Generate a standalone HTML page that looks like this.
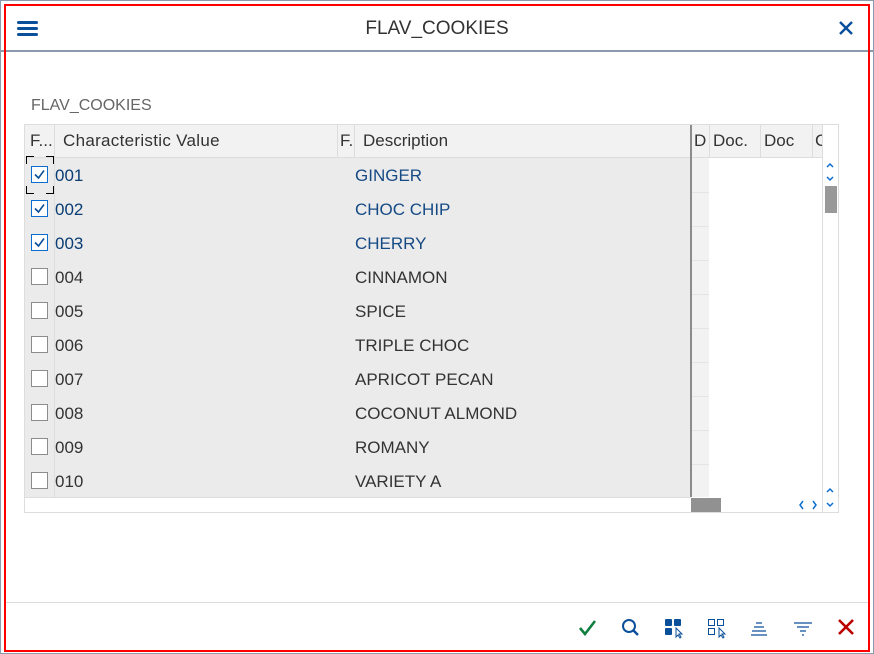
<!DOCTYPE html><html><head><style>
*{margin:0;padding:0;box-sizing:border-box}
body{width:874px;height:654px;background:#fff;font-family:"Liberation Sans",sans-serif;position:relative;overflow:hidden}
.a{position:absolute}
.t{font-size:17px;white-space:nowrap}
</style></head><body>
<div class="a" style="left:0;top:0;width:874px;height:654px;border:1px solid #8a9bb0"></div>
<div class="a" style="left:0;top:50px;width:874px;height:2px;background:#8a9bb0"></div>
<div class="a" style="left:4px;top:4px;width:866px;height:648px;border:2px solid #f00"></div>
<div class="a" style="left:17px;top:21px;width:21px;height:3px;background:#0a4f9a;border-radius:2px"></div>
<div class="a" style="left:17px;top:27px;width:21px;height:3px;background:#0a4f9a;border-radius:2px"></div>
<div class="a" style="left:17px;top:33px;width:21px;height:3px;background:#0a4f9a;border-radius:2px"></div>
<div class="a t" style="left:0;width:874px;text-align:center;top:18px;font-size:19px;color:#333">FLAV_COOKIES</div>
<svg class="a" style="left:838px;top:20px" width="16" height="16"><path d="M2 2L14 14M14 2L2 14" stroke="#0a4f9a" stroke-width="2.4"/></svg>
<div class="a t" style="left:31px;top:97px;font-size:16px;color:#666">FLAV_COOKIES</div>
<div class="a" style="left:24px;top:124px;width:815px;height:389px;border:1px solid #ddd"></div>
<div class="a" style="left:25px;top:125px;width:797px;height:33px;background:#f2f2f2;border-bottom:1px solid #ddd"></div>
<div class="a" style="left:25px;top:158px;width:666px;height:339px;background:#ebebeb"></div>
<div class="a" style="left:692px;top:158px;width:17px;height:339px;background:#f2f2f2"></div>
<div class="a" style="left:54px;top:125px;width:1px;height:372px;background:#ddd"></div>
<div class="a" style="left:337px;top:125px;width:1px;height:33px;background:#ddd"></div>
<div class="a" style="left:354px;top:125px;width:1px;height:33px;background:#ddd"></div>
<div class="a" style="left:690px;top:125px;width:2px;height:372px;background:#8c8c8c"></div>
<div class="a" style="left:709px;top:125px;width:1px;height:33px;background:#ddd"></div>
<div class="a" style="left:760px;top:125px;width:1px;height:33px;background:#ddd"></div>
<div class="a" style="left:812px;top:125px;width:1px;height:33px;background:#ddd"></div>
<div class="a" style="left:822px;top:125px;width:1px;height:387px;background:#ddd"></div>
<div class="a t" style="left:30px;top:131px;color:#333">F...</div>
<div class="a t" style="left:63px;top:131px;color:#333;letter-spacing:0.3px">Characteristic Value</div>
<div class="a t" style="left:340px;top:131px;color:#333">F.</div>
<div class="a t" style="left:363px;top:131px;color:#333">Description</div>
<div class="a t" style="left:694px;top:131px;color:#333">D</div>
<div class="a t" style="left:713px;top:131px;color:#333">Doc.</div>
<div class="a t" style="left:764px;top:131px;color:#333">Doc</div>
<div class="a t" style="left:815px;top:131px;color:#333;width:7px;overflow:hidden">C</div>
<div class="a" style="left:825px;top:186px;width:12px;height:27px;background:#999"></div>
<svg class="a" style="left:823px;top:160px" width="14" height="24"><path d="M4 7L7 4L10 7M4 17L7 20L10 17" fill="none" stroke="#0a6ed1" stroke-width="1.5"/></svg>
<svg class="a" style="left:823px;top:484px" width="14" height="26"><path d="M4 8L7 5L10 8M4 19L7 22L10 19" fill="none" stroke="#0a6ed1" stroke-width="1.5"/></svg>
<svg class="a" style="left:794px;top:498px" width="28" height="14"><path d="M9 3L6 7L9 11M19 3L22 7L19 11" fill="none" stroke="#0a6ed1" stroke-width="1.5"/></svg>
<div class="a" style="left:691px;top:498px;width:30px;height:14px;background:#919191"></div>
<div class="a" style="left:25px;top:497px;width:666px;height:1px;background:#ddd"></div>
<div id="rows"></div>
<svg class="a" style="left:26px;top:156px" width="28" height="38"><path d="M0.5 8V0.5H8M20 0.5H27.5V8M27.5 30V37.5H20M8 37.5H0.5V30" fill="none" stroke="#000" stroke-width="1"/></svg>
<script>
var d=[["001","GINGER",1],["002","CHOC CHIP",1],["003","CHERRY",1],["004","CINNAMON"],["005","SPICE"],["006","TRIPLE CHOC"],["007","APRICOT PECAN"],["008","COCONUT ALMOND"],["009","ROMANY"],["010","VARIETY A"]];
var h="";d.forEach(function(r,i){var y=158+i*34,c=r[2]?"#0a3d73":"#333",dc=r[2]?"#154a85":"#333";
h+='<div class="a" style="left:31px;top:'+(y+8)+'px;width:17px;height:17px;border:1px solid '+(r[2]?'#0a6ed1':'#8c8c8c')+';background:#fff"></div>';
if(r[2])h+='<svg class="a" style="left:31px;top:'+(y+8)+'px" width="17" height="17"><path d="M4 8.5L7.5 12L13 4.5" fill="none" stroke="#0a4f9a" stroke-width="1.6"/></svg>';
h+='<div class="a t" style="left:55px;top:'+(y+8)+'px;color:'+c+'">'+r[0]+'</div><div class="a t" style="left:355px;top:'+(y+8)+'px;color:'+dc+'">'+r[1]+'</div>';
if(i>0)h+='<div class="a" style="left:692px;top:'+y+'px;width:17px;height:1px;background:#e4e4e4"></div>';});
document.getElementById("rows").innerHTML=h;
</script>
<div class="a" style="left:6px;top:602px;width:862px;height:1px;background:#ddd"></div>
<svg class="a" style="left:576px;top:616px" width="280" height="24">
<path d="M4 12L9 18L19 5" fill="none" stroke="#107e3e" stroke-width="2.6"/>
<circle cx="53" cy="10" r="6" fill="none" stroke="#0a4f9a" stroke-width="2"/><path d="M57 14L62 19" stroke="#0a4f9a" stroke-width="2.4"/>
<rect x="89" y="3" width="7" height="7" rx="1" fill="#0a4f9a"/><rect x="98" y="3" width="7" height="7" rx="1" fill="#0a4f9a"/><rect x="89" y="12" width="7" height="7" rx="1" fill="#0a4f9a"/><path d="M100 12L100 21L102 19L104 22L105 21L103 18L106 18Z" fill="#fff" stroke="#0a4f9a"/>
<rect x="132.5" y="3.5" width="6" height="6" fill="none" stroke="#0a4f9a"/><rect x="141.5" y="3.5" width="6" height="6" fill="none" stroke="#0a4f9a"/><rect x="132.5" y="12.5" width="6" height="6" fill="none" stroke="#0a4f9a"/><path d="M143 12L143 21L145 19L147 22L148 21L146 18L149 18Z" fill="#fff" stroke="#0a4f9a"/>
<path d="M180 7H186M178 11H188M176 15H190M175 19H191" stroke="#0a4f9a" stroke-width="1.3"/>
<path d="M218 7H236M221 11H233M224 15H230M226 19H228" stroke="#0a4f9a" stroke-width="1.3"/>
<path d="M263 4L277 18M277 4L263 18" stroke="#bb0000" stroke-width="2.6"/>
</svg>
</body></html>
